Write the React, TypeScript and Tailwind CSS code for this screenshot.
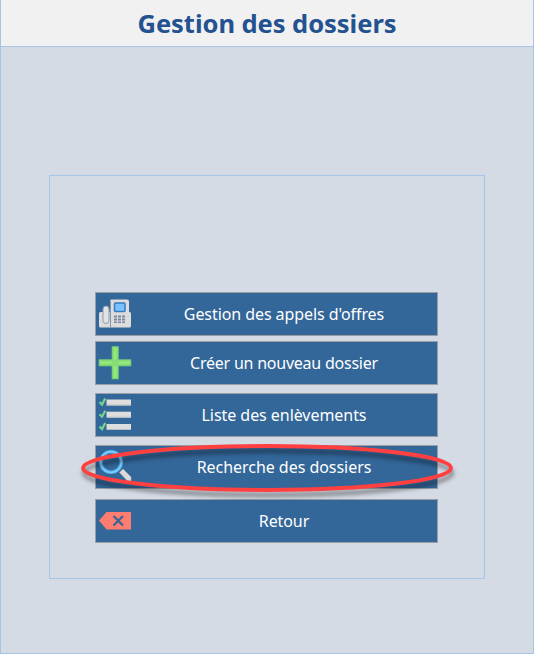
import type { ReactNode } from "react";

const PhoneIcon = () => (
  <svg width="34" height="32" viewBox="0 0 34 32">
    <path d="M13.500 1.500h15.500a2 2 0 0 1 2 2V14h.500a1.500 1.500 0 0 1 1.500 1.500V28a1.500 1.500 0 0 1-1.500 1.500h-29A1.500 1.500 0 0 1 1 28V15.500A1.500 1.500 0 0 1 2.500 14H12V3a1.500 1.500 0 0 1 1.500-1.500z" fill="#dcdcdd" />
    <rect x="5" y="8" width="6" height="17.500" rx="3" fill="#e2e2e2" stroke="#8b9db2" strokeWidth="1" />
    <path d="M12.500 3v26" stroke="#8198b1" />
    <rect x="16.500" y="5" width="10.500" height="8.500" rx="1" fill="#78c3ff" stroke="#367bbd" strokeWidth="1.500" />
    <path d="M16 17.500h3v2h-3zm4 0h3v2h-3zm4 0h3v2h-3zM16 20.500h3v2h-3zm4 0h3v2h-3zm4 0h3v2h-3zM16 23.500h3v1.500h-3zm4 0h3v1.500h-3zm4 0h3v1.500h-3z" fill="#7888a2" />
  </svg>
);

const PlusIcon = () => (
  <svg width="34" height="34" viewBox="0 0 34 34">
    <path d="M14 .5h6.500v13H33V20H20.500v13H14V20H1v-6.500h13z" fill="#86dc75" stroke="#65bd7a" strokeWidth=".7" />
    <path d="M17.250 1.500v12M17.250 20v12M2 16.750h12M20.500 16.750H32" stroke="#96ec7e" strokeWidth="2" />
  </svg>
);

const ListIcon = () => (
  <svg width="34" height="34" viewBox="0 0 34 34">
    {[0.5, 12.7, 25].map((y) => (
      <g key={y} transform={`translate(0 ${y})`}>
        <rect x="8.500" y="1" width="24.500" height="6" fill="#dedede" />
        <path d="M9 6.500h24" stroke="#b8bdc4" />
        <path d="M8.500 1v6" stroke="#889bb2" />
        <path d="M1.500 3.500 4 6l3.200-6" fill="none" stroke="#75d391" strokeWidth="2.300" />
      </g>
    ))}
  </svg>
);

const SearchIcon = () => (
  <svg width="34" height="34" viewBox="0 0 34 34">
    <path d="m21.500 22.500 3.500-3.500 8 8v4h-3.500z" fill="#dedad8" stroke="#b5b8be" strokeWidth=".5" />
    <circle cx="13" cy="12" r="10.300" fill="none" stroke="#4fa9e7" strokeWidth="3.600" />
    <circle cx="13" cy="12" r="10.300" fill="none" stroke="#7bcbff" strokeWidth="1.700" />
  </svg>
);

const BackIcon = () => (
  <svg width="34" height="34" viewBox="0 0 34 34">
    <path d="M1 16.500 8.500 8H33v17.500H8.500z" fill="#ff7c70" />
    <path d="m15.500 12 9.500 9.500m0-9.500-9.500 9.500" stroke="#33669a" strokeWidth="2.200" />
  </svg>
);

function MenuButton({ icon, label, spacing }: { icon: ReactNode; label: string; spacing: string }) {
  return (
    <button className="flex h-11 w-[343px] shrink-0 items-center border border-[#9b9fa5] bg-[#336699] text-white">
      <span className="ml-[2px] flex w-[34px] shrink-0">{icon}</span>
      <span className={`ml-[-1px] flex-1 text-center text-[16px] leading-5 whitespace-nowrap ${spacing}`}>{label}</span>
    </button>
  );
}

export default function App() {
  return (
    <div className="flex h-[654px] w-[534px] flex-col border-x border-b border-[#a6c5e8] bg-[#d5dbe5] font-['Noto_Sans','DejaVu_Sans',sans-serif]">
      <header className="flex h-[47px] shrink-0 items-center justify-center border-b border-[#a6c5e8] bg-[#f1f1f1]">
        <h1 className="text-[25.500px] font-bold leading-8 tracking-[-0.04px] whitespace-nowrap text-[#245290]">Gestion des dossiers</h1>
      </header>
      <main className="mt-32 ml-12 flex h-[404px] w-[436px] flex-col border border-[#a6c5e8] pt-[116px] pl-[45px]">
        <MenuButton icon={<PhoneIcon />} label="Gestion des appels d'offres" spacing="tracking-[-0.08px]" />
        <div className="mt-[5px] flex flex-col gap-2">
          <MenuButton icon={<PlusIcon />} label="Créer un nouveau dossier" spacing="tracking-[-0.23px]" />
          <MenuButton icon={<ListIcon />} label="Liste des enlèvements" spacing="tracking-[-0.05px]" />
          <div className="relative">
            <MenuButton icon={<SearchIcon />} label="Recherche des dossiers" spacing="tracking-[-0.04px]" />
            <svg className="pointer-events-none absolute -top-[10px] -left-[20px] overflow-visible" width="384" height="66" viewBox="0 0 384 66">
              <ellipse cx="192" cy="33" rx="184" ry="22" fill="none" stroke="#ff4040" strokeWidth="4" className="drop-shadow-[1px_5px_2px_rgba(0,0,0,0.42)]" />
            </svg>
          </div>
        </div>
        <div className="mt-[10px]">
          <MenuButton icon={<BackIcon />} label="Retour" spacing="tracking-[-0.1px]" />
        </div>
      </main>
    </div>
  );
}
